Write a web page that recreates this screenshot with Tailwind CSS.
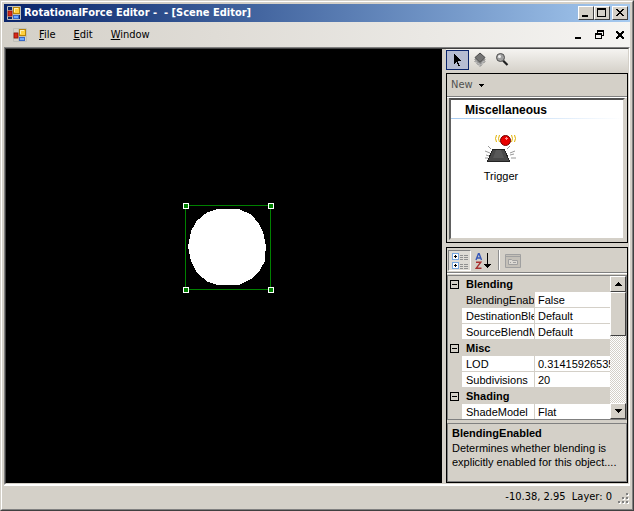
<!DOCTYPE html>
<html lang="en">

<head>
    <meta charset="UTF-8">
    <meta name="viewport" content="width=device-width, initial-scale=1.0">
    <title>RotationalForce Editor</title>
    <script src="https://cdn.jsdelivr.net/npm/@tailwindcss/browser@4"></script>
</head>

<body class="h-screen bg-[#d4d0c8] text-black text-[11px] leading-4 font-['DejaVu_Sans_Condensed','DejaVu_Sans',sans-serif] cursor-default select-none">
    <svg class="hidden" aria-hidden="true">
        <symbol id="form-icon" viewBox="0 0 14 14">
            <path d="M.5 .5h13v13H.5zM5.500 .5v13M.5 4.500h5M5.500 8.500h8M.5 10.500h5M11.500 8.500v5" fill="none" stroke="#c0c0b8" />
            <rect x="1" y="5" width="4" height="5" fill="#d82818" stroke="#901008" stroke-width=".8" />
            <rect x="6.500" y="1.500" width="6" height="6" fill="#ffd040" stroke="#b88408" />
            <path d="M7 2h4v1H8v3H7z" fill="#fff0b0" />
            <rect x="6.500" y="9.500" width="5" height="3" fill="#6ca8ff" stroke="#3868c8" />
        </symbol>
    </svg>

    <div class="h-full flex flex-col border border-t-[#d4d0c8] border-l-[#d4d0c8] border-r-[#404040] border-b-[#404040]">
        <div class="flex-1 min-h-0 flex flex-col border border-t-white border-l-white border-r-[#808080] border-b-[#808080] p-[2px]">

            <!-- Title bar -->
            <header class="h-[18px] shrink-0 flex items-center pl-[3px] pr-[2px] bg-linear-to-r from-[#0a246a] to-[#a6caf0] text-white">
                <svg class="size-[14px] mr-[3px]"><use href="#form-icon" /></svg>
                <h1 class="font-bold whitespace-pre">RotationalForce Editor -  - [Scene Editor]</h1>
                <div class="ml-auto flex">
                    <button aria-label="Minimize" class="w-4 h-[14px] bg-[#d4d0c8] border border-t-white border-l-white border-r-[#404040] border-b-[#404040]">
                        <svg class="w-[14px] h-3" viewBox="0 0 14 12" shape-rendering="crispEdges"><path d="M3 8h6v2H3z" /></svg>
                    </button>
                    <button aria-label="Maximize" class="w-4 h-[14px] bg-[#d4d0c8] border border-t-white border-l-white border-r-[#404040] border-b-[#404040]">
                        <svg class="w-[14px] h-3" viewBox="0 0 14 12" shape-rendering="crispEdges"><path d="M2 1h9v9H2zM3 3v6h7V3z" fill-rule="evenodd" /></svg>
                    </button>
                    <button aria-label="Close" class="w-4 h-[14px] ml-[2px] bg-[#d4d0c8] border border-t-white border-l-white border-r-[#404040] border-b-[#404040]">
                        <svg class="w-[14px] h-3" viewBox="0 0 14 12" shape-rendering="crispEdges"><path d="M3 2h2v1h1v1h2V3h1V2h2v1h-1v1H9v1H8v1h1v1h1v1h1v1H9V8H8V7H6v1H5v1H3V8h1V7h1V6h1V5H5V4H4V3H3z" /></svg>
                    </button>
                </div>
            </header>

            <!-- Menu bar -->
            <nav class="h-[25px] shrink-0 flex items-center pl-[9px] pr-1 bg-linear-to-r from-[#d4d0c8] to-[#f5f4f2]">
                <svg class="size-[14px] mr-3"><use href="#form-icon" /></svg>
                <div class="flex gap-[18px]">
                    <button><u>F</u>ile</button>
                    <button><u>E</u>dit</button>
                    <button><u>W</u>indow</button>
                </div>
                <div class="ml-auto flex gap-[9px]">
                    <button aria-label="Minimize child" class="w-3 h-3">
                        <svg class="size-3" viewBox="0 0 12 12" shape-rendering="crispEdges"><path d="M3 8h6v2H3z" /></svg>
                    </button>
                    <button aria-label="Restore child" class="w-3 h-3">
                        <svg class="size-3" viewBox="0 0 12 12" shape-rendering="crispEdges"><path d="M4 1h7v6H9v3H2V4h2zM5 3v1h4v2h1V3zM3 6v3h5V6z" fill-rule="evenodd" /></svg>
                    </button>
                    <button aria-label="Close child" class="w-3 h-3">
                        <svg class="size-3" viewBox="0 0 12 12" shape-rendering="crispEdges"><path d="M2 2h2v1h1v1h2V3h1V2h2v2H9v1H8v2h1v1h1v2H8V9H7V8H5v1H4v1H2V8h1V7h1V5H3V4H2z" /></svg>
                    </button>
                </div>
            </nav>

            <!-- Workspace -->
            <div class="flex-1 min-h-0 flex border border-t-[#808080] border-l-[#808080] border-r-white border-b-white">
                <div class="flex-1 min-w-0 flex border border-t-[#404040] border-l-[#404040] border-r-[#d4d0c8] border-b-[#d4d0c8]">
                    <main class="flex-1 min-w-0 bg-black flex items-center justify-center">
                        <svg class="w-[91px] h-[90px] mr-[-9px] mb-9" viewBox="0 0 91 90" shape-rendering="crispEdges" role="img" aria-label="Selected circle">
                            <path d="M35.300 5.700H55.300L68 11.500L75.500 20L80 29L83 43L81.500 58.700L77 67L68.700 75.500L55.300 82.300H35.300L23.700 78.500L13.700 69L8 58.500L5 44L8 28L13.700 18L23.700 9.500z" fill="#fff" />
                            <path d="M2.500 2.500h85v84h-85z" fill="none" stroke="#008000" />
                            <g fill="#008000" stroke="#fff">
                                <rect x=".5" y=".5" width="5" height="5" />
                                <rect x="85.500" y=".5" width="5" height="5" />
                                <rect x=".5" y="84.500" width="5" height="5" />
                                <rect x="85.500" y="84.500" width="5" height="5" />
                            </g>
                        </svg>
                    </main>

                    <aside class="w-[186px] shrink-0 flex flex-col pl-1 font-['Liberation_Sans',Arial,sans-serif]">
                        <!-- Tools -->
                        <div class="h-6 shrink-0 flex items-start pt-px bg-linear-to-b from-[#f5f4f1] to-[#d4d0c8]">
                            <button aria-label="Select" class="w-[23px] h-5 flex items-center justify-center border border-[#0a246a] bg-[#b6bdd2]">
                                <svg class="size-4" viewBox="0 0 16 16" shape-rendering="crispEdges"><path d="M4 2h1v1h1v1h1v1h1v1h1v1h1v1h1v1H8v2h1v2h1v1H8v-2H7v-2H6v1H5v1H4z" /></svg>
                            </button>
                            <button aria-label="Layers" class="w-[22px] h-5 flex items-center justify-center">
                                <svg class="size-4" viewBox="0 0 16 16">
                                    <path d="M3 9.500l5 5 5-5-5-5z" fill="#d0d0d0" stroke="#505050" stroke-dasharray="1 1" />
                                    <path d="M3 7.500l5 5 5-5-5-5z" fill="#b0b0b0" stroke="#505050" stroke-dasharray="1 1" />
                                    <path d="M3 5.500l5 5 5-5-5-4.500z" fill="#747474" stroke="#484848" />
                                </svg>
                            </button>
                            <button aria-label="Zoom" class="w-[22px] h-5 flex items-center justify-center">
                                <svg class="size-4" viewBox="0 0 16 16">
                                    <path d="M9 8.500l4.500 4.500" stroke="#202020" stroke-width="2.200" />
                                    <circle cx="6.500" cy="5.500" r="4" fill="#a0a0a0" stroke="#505050" />
                                    <circle cx="5.500" cy="4.500" r="1.500" fill="#f0f0f0" />
                                </svg>
                            </button>
                        </div>

                        <!-- Toolbox -->
                        <section class="h-[170px] shrink-0 flex flex-col border border-black">
                            <div class="h-[23px] shrink-0 flex items-center px-1 border-b border-[#808080]">
                                <button class="flex items-center gap-[6px] text-[#505050] font-['DejaVu_Sans_Condensed','DejaVu_Sans',sans-serif]">New
                                    <svg class="w-[5px] h-[3px]" viewBox="0 0 5 3" shape-rendering="crispEdges"><path d="M0 0h5v1H4v1H3v1H2V2H1V1H0z" fill="#000" /></svg>
                                </button>
                            </div>
                            <div class="flex-1 flex border-t border-white px-[2px] pb-[2px]">
                                <div class="flex-1 flex flex-col bg-white border-2 border-t-[#505050] border-l-[#606060] border-r-[#d4d0c8] border-b-[#d4d0c8]">
                                    <h2 class="h-[18px] pl-[14px] leading-5 font-bold text-[12px]">Miscellaneous</h2>
                                    <div class="h-px bg-linear-to-r from-[#a6caf0] to-white"></div>
                                    <button class="w-[100px] pt-[13px] flex flex-col items-center">
                                        <svg class="w-8 h-9" viewBox="0 0 32 36">
                                            <path d="M7.500 17.500h12l5 12h-22z" fill="#484848" stroke="#222" shape-rendering="crispEdges" />
                                            <path d="M11 18h5l3 8H8z" fill="#585858" />
                                            <path d="M3 14l3 3M0 19l5 2M0 26h3M1 23l3 1M25 14l-3 3M30 19l-5 2M26 26h5M25 23l4-1" stroke="#999" fill="none" />
                                            <path d="M11.500 3q-2 3.500 0 7M14.500 3q-2 3.500 0 7M26.500 3q2 3.500 0 7M29.500 3q2 3.500 0 7" stroke="#e0b000" fill="none" />
                                            <circle cx="20.500" cy="8.500" r="5" fill="#e80000" stroke="#700000" />
                                            <path d="M20 6.500h3M21.500 5v3" stroke="#ff9090" />
                                        </svg>
                                        <span class="leading-4">Trigger</span>
                                    </button>
                                </div>
                            </div>
                        </section>

                        <!-- Properties -->
                        <section class="flex-1 min-h-0 mt-1 flex flex-col border border-black">
                            <div class="h-[25px] shrink-0 flex items-start pl-px pt-[2px] border-b border-[#808080]">
                                <button aria-label="Categorized" class="w-[23px] h-[21px] flex items-center justify-center border border-t-[#808080] border-l-[#808080] border-r-white border-b-white bg-[#dedbd5]">
                                    <svg class="size-4" viewBox="0 0 16 16" shape-rendering="crispEdges">
                                        <rect x=".5" y=".5" width="6" height="6" rx="1" fill="#fff" stroke="#78a8e0" />
                                        <rect x=".5" y="9.500" width="6" height="6" rx="1" fill="#fff" stroke="#78a8e0" />
                                        <path d="M2 3h3v1H2zM3 2h1v3H3zM2 12h3v1H2zM3 11h1v3H3z" />
                                        <path d="M8 2h3v1H8zM8 4h3v1H8zM8 6h3v1H8zM12 2h4v1h-4zM12 4h4v1h-4zM12 6h4v1h-4zM8 11h3v1H8zM8 13h3v1H8zM8 15h3v1H8zM12 11h4v1h-4zM12 13h4v1h-4zM12 15h4v1h-4z" fill="#909090" />
                                    </svg>
                                </button>
                                <button aria-label="Alphabetical" class="w-[23px] h-[21px] flex items-center justify-center">
                                    <svg class="size-4" viewBox="0 0 16 16">
                                        <path d="M1 7l2.500-6.500h.6L6.500 7M2 5h4" stroke="#3858b8" stroke-width="1.400" fill="none" />
                                        <path d="M1 9.200h4.800L1.300 15.200H6.500" stroke="#a83030" stroke-width="1.400" fill="none" />
                                        <path d="M12 0h1v11h3v1h-1v1h-1v1h-1v1h-1v-1h-1v-1h-1v-1H9v-1h3z" shape-rendering="crispEdges" />
                                    </svg>
                                </button>
                                <span class="w-[2px] h-5 ml-1 bg-[#909090] border-r border-white"></span>
                                <button aria-label="Property pages" disabled class="w-[23px] h-[21px] ml-px flex items-center justify-center">
                                    <svg class="size-4" viewBox="0 0 16 16" fill="none" stroke="#a0a0a0">
                                        <path d="M.5 1.500h15v13H.5z" fill="#c4c0b8" />
                                        <path d="M.5 3.500h15" />
                                        <path d="M3.500 6.500h3l1 1h5v4h-9z" fill="#dcd9d3" />
                                        <path d="M5 9.500h1M8 9.500h3" />
                                    </svg>
                                </button>
                            </div>
                            <div class="h-px shrink-0 bg-white"></div>

                            <div class="flex-1 min-h-0 flex mt-px border border-[#808080] overflow-hidden">
                                <div class="flex-1 min-w-0 overflow-hidden">
                                    <table class="w-full table-fixed border-separate border-spacing-0">
                                        <colgroup>
                                            <col class="w-[14px]">
                                            <col class="w-[73px]">
                                            <col>
                                        </colgroup>
                                        <tbody id="property-rows"></tbody>
                                    </table>
                                </div>
                                <div class="w-4 shrink-0 flex flex-col bg-[repeating-conic-gradient(#ffffff_0_25%,#d4d0c8_0_50%)] bg-size-[2px_2px]">
                                    <button aria-label="Scroll up" class="size-4 shrink-0 flex items-center justify-center bg-[#d4d0c8] border border-t-white border-l-white border-r-[#404040] border-b-[#404040]">
                                        <svg class="w-[7px] h-1" viewBox="0 0 7 4" shape-rendering="crispEdges"><path d="M3 0h1v1h1v1h1v1h1v1H0V3h1V2h1V1h1z" /></svg>
                                    </button>
                                    <div class="h-11 shrink-0 bg-[#d4d0c8] border border-t-white border-l-white border-r-[#404040] border-b-[#404040]"></div>
                                    <button aria-label="Scroll down" class="size-4 mt-auto shrink-0 flex items-center justify-center bg-[#d4d0c8] border border-t-white border-l-white border-r-[#404040] border-b-[#404040]">
                                        <svg class="w-[7px] h-1" viewBox="0 0 7 4" shape-rendering="crispEdges"><path d="M0 0h7v1H6v1H5v1H4v1H3V3H2V2H1V1H0z" /></svg>
                                    </button>
                                </div>
                            </div>

                            <div class="h-[59px] shrink-0 mt-[3px] pl-1 pt-px border border-[#808080] leading-[14px] overflow-hidden">
                                <h3 class="font-bold leading-4">BlendingEnabled</h3>
                                <p>Determines whether blending is<br>explicitly enabled for this object....</p>
                            </div>
                        </section>
                    </aside>
                </div>
            </div>

            <!-- Status bar -->
            <footer class="h-[22px] shrink-0 flex items-center justify-end border-t border-white">
                <span class="whitespace-pre">-10.38, 2.95  Layer: 0</span>
                <svg class="w-[11px] h-[11px] ml-[6px] mr-px mt-1" viewBox="0 0 11 11" shape-rendering="crispEdges">
                    <path d="M9 1h2v2H9zM5 5h2v2H5zM9 5h2v2H9zM1 9h2v2H1zM5 9h2v2H5zM9 9h2v2H9z" fill="#fff" />
                    <path d="M8 0h2v2H8zM4 4h2v2H4zM8 4h2v2H8zM0 8h2v2H0zM4 8h2v2H4zM8 8h2v2H8z" fill="#808080" />
                </svg>
            </footer>
        </div>
    </div>

    <script>
        const groups = [
            { name: 'Blending', props: [['BlendingEnabled', 'False'], ['DestinationBlendMode', 'Default'], ['SourceBlendMode', 'Default']] },
            { name: 'Misc', props: [['LOD', '0.3141592653589793'], ['Subdivisions', '20']] },
            { name: 'Shading', props: [['ShadeModel', 'Flat']] }
        ];
        const selected = 'BlendingEnabled';
        const rows = document.getElementById('property-rows');

        groups.forEach(group => {
            rows.innerHTML += `
                <tr class="h-4">
                    <td class="p-0"><button aria-label="Collapse ${group.name}" class="block size-[9px] ml-[2px] border border-black"><span class="block w-[5px] h-px mx-auto bg-black"></span></button></td>
                    <th colspan="2" class="p-0 pl-1 text-left leading-4 font-bold">${group.name}</th>
                </tr>`;
            group.props.forEach(([name, value]) => {
                rows.innerHTML += `
                    <tr class="h-4">
                        <td class="p-0"></td>
                        <td class="p-0 pl-1 pt-px leading-[14px] border-b border-r border-[#d4d0c8] overflow-hidden whitespace-nowrap ${name === selected ? 'bg-[#d4d0c8]' : 'bg-white'}">${name}</td>
                        <td class="p-0 pl-[3px] pt-px leading-[14px] border-b border-[#d4d0c8] bg-white overflow-hidden whitespace-nowrap">${value}</td>
                    </tr>`;
            });
        });
    </script>
</body>

</html>
